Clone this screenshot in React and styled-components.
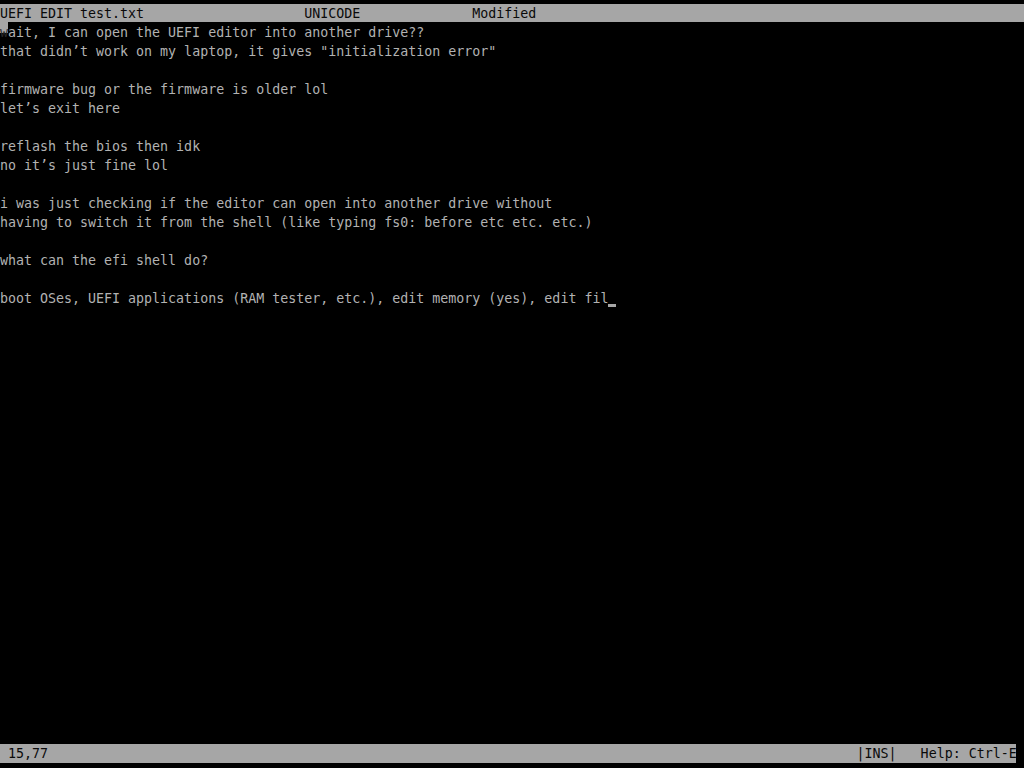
import React from "react";
import styled, { createGlobalStyle } from "styled-components";

const GlobalStyle = createGlobalStyle`
  html, body {
    margin: 0;
    padding: 0;
    background: #000;
  }
`;

const Screen = styled.div`
  width: 1024px;
  height: 768px;
  padding: 3px 0 5px;
  box-sizing: border-box;
  background: #000;
  display: flex;
  flex-direction: column;
  font-family: "DejaVu Sans Mono", "Liberation Mono", monospace;
  font-size: 13.3px;
  color: #b2b2b2;
  overflow: hidden;
`;

const Bar = styled.div`
  width: ${(p) => p.$cols * 8}px;
  height: 19px;
  line-height: 20px;
  background: #a6a6a6;
  color: #0a0a0a;
  white-space: pre;
  flex-shrink: 0;
`;

const TitleBar = styled(Bar)`
  height: 18px;
  margin-top: 1px;
  line-height: 19px;
`;

const Body = styled.div`
  flex: 1;
  display: flex;
  flex-direction: column;
`;

const Line = styled.div`
  height: 19px;
  line-height: 21px;
  white-space: pre;
`;

const Cell = styled.span`
  display: inline-block;
  width: 8px;
  height: 19px;
  vertical-align: top;
`;

const MouseCell = styled(Cell)`
  background: linear-gradient(#a6a6a6 0 11px, transparent 11px);
  color: #2a2a2a;
`;

const Cursor = styled(Cell)`
  background: linear-gradient(transparent 0 16px, #a6a6a6 16px 19px);
`;

const pad = (s, n) => s + " ".repeat(Math.max(0, n - s.length));

const lines = [
  "ait, I can open the UEFI editor into another drive??",
  'that didn’t work on my laptop, it gives "initialization error"',
  "",
  "firmware bug or the firmware is older lol",
  "let’s exit here",
  "",
  "reflash the bios then idk",
  "no it’s just fine lol",
  "",
  "i was just checking if the editor can open into another drive without",
  "having to switch it from the shell (like typing fs0: before etc etc. etc.)",
  "",
  "what can the efi shell do?",
  "",
  "boot OSes, UEFI applications (RAM tester, etc.), edit memory (yes), edit fil",
];

const title =
  pad(pad("UEFI EDIT test.txt", 38) + "UNICODE", 59) + "Modified";
const status = pad(pad(" 15,77", 107) + "|INS|", 115) + "Help: Ctrl-E";

export default function App() {
  return (
    <>
      <GlobalStyle />
      <Screen>
        <TitleBar $cols={128}>{title}</TitleBar>
        <Body>
          {lines.map((text, i) => (
            <Line key={i}>
              {i === 0 && <MouseCell>w</MouseCell>}
              {text}
              {i === lines.length - 1 && <Cursor />}
            </Line>
          ))}
        </Body>
        <Bar $cols={127}>{status}</Bar>
      </Screen>
    </>
  );
}
